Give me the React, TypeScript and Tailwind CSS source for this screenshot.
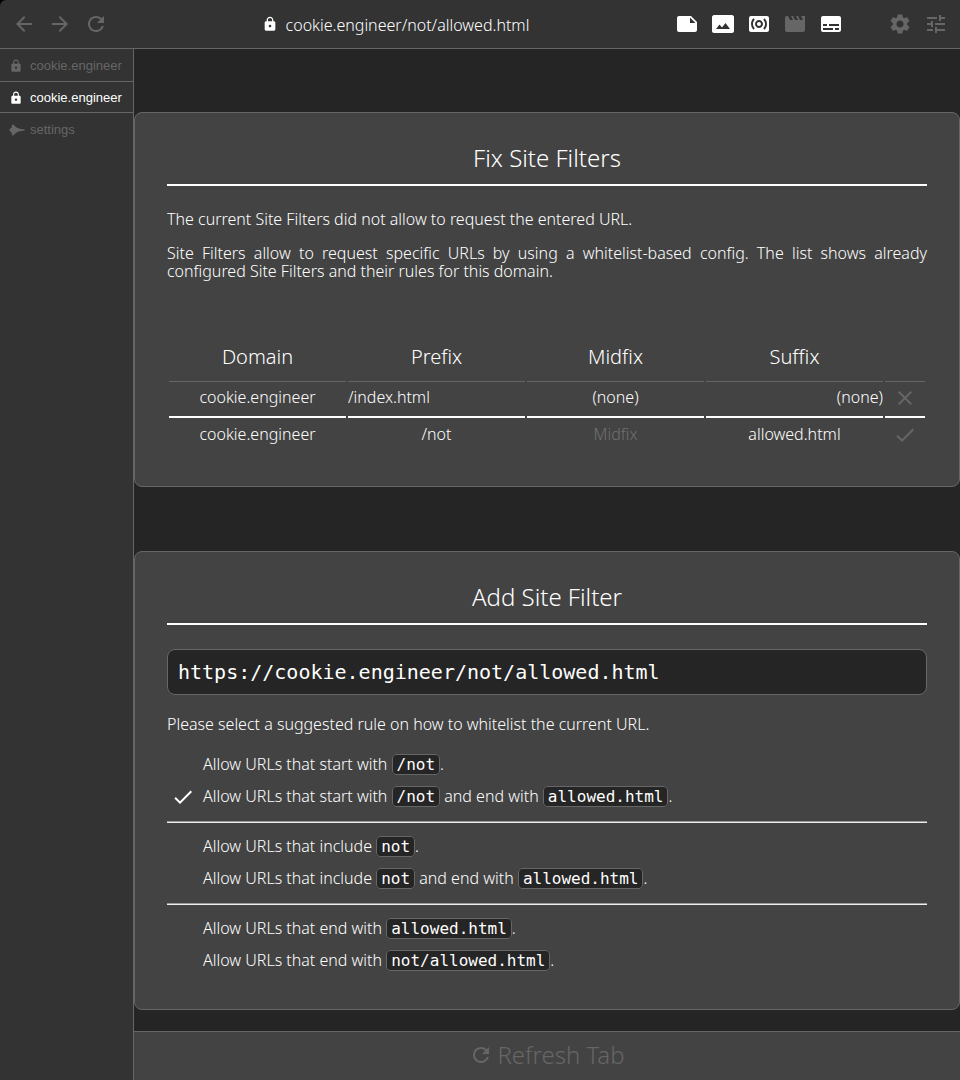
import React, { Fragment, useState } from "react";
import type { ReactNode } from "react";
import {
  MdArrowBack,
  MdArrowForward,
  MdCheck,
  MdClose,
  MdLock,
  MdMovie,
  MdNote,
  MdPhotoSizeSelectActual,
  MdRefresh,
  MdSettings,
  MdSubtitles,
  MdSurroundSound,
  MdTune,
} from "react-icons/md";

function IconButton({ label, active = false, children }: { label: string; active?: boolean; children: ReactNode }) {
  return (
    <button
      type="button"
      aria-label={label}
      className={active ? "size-6 text-2xl text-white" : "size-6 text-2xl text-[#666666]"}
    >
      {children}
    </button>
  );
}

function Header() {
  return (
    <header className="flex h-[49px] items-center rounded-tl-md border-b border-[#666666] bg-[#333333] px-3">
      <nav aria-label="History" className="flex gap-3 pr-3">
        <IconButton label="Back"><MdArrowBack /></IconButton>
        <IconButton label="Forward"><MdArrowForward /></IconButton>
        <IconButton label="Reload"><MdRefresh /></IconButton>
      </nav>
      <div className="flex flex-1 items-center justify-center gap-2 pr-1 text-white">
        <MdLock className="size-4" />
        <span className="pt-0.5 text-base leading-6">cookie.engineer/not/allowed.html</span>
      </div>
      <div className="flex gap-3">
        <IconButton label="Text" active><MdNote /></IconButton>
        <IconButton label="Images" active><MdPhotoSizeSelectActual /></IconButton>
        <IconButton label="Audio" active><MdSurroundSound /></IconButton>
        <IconButton label="Video"><MdMovie /></IconButton>
        <IconButton label="Other" active><MdSubtitles /></IconButton>
      </div>
      <div className="ml-[45px] flex gap-3">
        <IconButton label="Site settings"><MdSettings /></IconButton>
        <IconButton label="Browser settings"><MdTune /></IconButton>
      </div>
    </header>
  );
}

function ShipIcon() {
  return (
    <svg viewBox="0 0 16 14" className="h-3.5 w-4" fill="currentColor" aria-hidden="true">
      <path d="M3 1.4 L4.4 1.8 L7.6 4.6 L10.4 5.8 L15.8 6.4 V7.6 L10.4 8.2 L7.6 9.4 L4.4 12.2 L3 12.6 L2.6 9.4 L1.4 8.8 L0.2 7 L1.4 5.2 L2.6 4.6 Z" />
    </svg>
  );
}

function Sidebar() {
  const base = "flex h-8 w-full items-center border-y pl-[9px] pt-0.5 text-left font-['Liberation_Sans',sans-serif] text-[13px] font-normal ";
  const idle = base + "border-transparent text-[#666666]";
  return (
    <aside className="w-[134px] shrink-0 border-r border-[#666666] bg-[#333333]">
      <button type="button" className={idle}>
        <span className="w-[21px]"><MdLock className="size-3.5" /></span>cookie.engineer
      </button>
      <button type="button" className={base + "border-[#666666] text-white"}>
        <span className="w-[21px]"><MdLock className="size-3.5" /></span>cookie.engineer
      </button>
      <button type="button" className={idle}>
        <span className="w-[21px]"><ShipIcon /></span>settings
      </button>
    </aside>
  );
}

function Card({ title, children }: { title: string; children: ReactNode }) {
  return (
    <section className="rounded-lg border border-[#666666] bg-[#434343] p-8">
      <h2 className="mb-6 border-b-2 border-white pb-[13px] text-center text-2xl leading-[26px]">{title}</h2>
      {children}
    </section>
  );
}

function FilterTable() {
  const head = "h-12 border-b border-[#666666] p-0 pb-0.5 text-xl font-light";
  const cell = "h-[34px] border-b-2 border-white p-0 pb-1.5 text-base leading-[26px]";
  const field = "block h-8 w-full bg-transparent pb-1 text-center text-base text-white placeholder:text-[#707070] placeholder:opacity-100";
  return (
    <table className="mt-13 w-full table-fixed border-separate border-spacing-0.5">
      <thead>
        <tr>
          <th className={head}>Domain</th>
          <th className={head}>Prefix</th>
          <th className={head}>Midfix</th>
          <th className={head}>Suffix</th>
          <th className={head + " w-10"}></th>
        </tr>
      </thead>
      <tbody>
        <tr>
          <td className={cell + " text-center"}>cookie.engineer</td>
          <td className={cell + " text-left"}>/index.html</td>
          <td className={cell + " text-center"}>(none)</td>
          <td className={cell + " text-right"}>(none)</td>
          <td className="border-b-2 border-white p-0 pb-1">
            <button type="button" aria-label="Remove filter" className="mx-auto block text-2xl text-[#666666]"><MdClose /></button>
          </td>
        </tr>
        <tr>
          <td className="p-0"><input aria-label="Domain" className={field} defaultValue="cookie.engineer" /></td>
          <td className="p-0"><input aria-label="Prefix" className={field} defaultValue="/not" /></td>
          <td className="p-0"><input aria-label="Midfix" className={field} placeholder="Midfix" /></td>
          <td className="p-0"><input aria-label="Suffix" className={field} defaultValue="allowed.html" /></td>
          <td className="p-0 pb-0.5">
            <button type="button" aria-label="Confirm filter" className="mx-auto block text-2xl text-[#666666]"><MdCheck /></button>
          </td>
        </tr>
      </tbody>
    </table>
  );
}

function Code({ children }: { children: ReactNode }) {
  return (
    <code className="rounded border border-[#666666] bg-[#252525] px-1 font-['DejaVu_Sans_Mono',monospace] text-base font-normal">
      {children}
    </code>
  );
}

const ruleGroups: { verb: string; value: string; end?: string }[][] = [
  [
    { verb: "start with", value: "/not" },
    { verb: "start with", value: "/not", end: "allowed.html" },
  ],
  [
    { verb: "include", value: "not" },
    { verb: "include", value: "not", end: "allowed.html" },
  ],
  [
    { verb: "end with", value: "allowed.html" },
    { verb: "end with", value: "not/allowed.html" },
  ],
];

function RuleList() {
  const [selected, setSelected] = useState("0-1");
  return (
    <div role="radiogroup" aria-label="Suggested rules" className="mt-4">
      {ruleGroups.map((group, g) => (
        <Fragment key={g}>
          {g > 0 ? <hr className="my-2 h-0.5 border-y border-t-[#9a9a9a] border-b-[#eeeeee]" /> : null}
          {group.map((rule, r) => {
            const id = `${g}-${r}`;
            return (
              <label key={id} className="flex h-8 items-center gap-2 pl-1 text-base">
                <input
                  type="radio"
                  name="rule"
                  className="peer sr-only"
                  checked={selected === id}
                  onChange={() => setSelected(id)}
                />
                <MdCheck className="invisible size-6 shrink-0 peer-checked:visible" />
                <span className="pb-0.5">
                  Allow URLs that {rule.verb} <Code>{rule.value}</Code>
                  {rule.end ? <> and end with <Code>{rule.end}</Code></> : null}.
                </span>
              </label>
            );
          })}
        </Fragment>
      ))}
    </div>
  );
}

export default function App() {
  return (
    <div className="flex min-h-screen flex-col bg-black font-['Noto_Sans',sans-serif] font-light text-white">
      <Header />
      <div className="flex flex-1">
        <Sidebar />
        <div className="flex min-w-0 flex-1 flex-col bg-[#252525]">
          <main className="flex flex-1 flex-col gap-16 pt-[63px]">
            <Card title="Fix Site Filters">
              <p className="text-base leading-[18px]">The current Site Filters did not allow to request the entered URL.</p>
              <p className="mt-4 text-justify text-base leading-[18px]">
                Site Filters allow to request specific URLs by using a whitelist-based config. The list shows already
                configured Site Filters and their rules for this domain.
              </p>
              <FilterTable />
            </Card>
            <Card title="Add Site Filter">
              <input
                aria-label="URL"
                readOnly
                className="block h-[46px] w-full rounded-lg border border-[#666666] bg-[#252525] px-2.5 font-['DejaVu_Sans_Mono',monospace] text-xl font-normal"
                defaultValue="https://cookie.engineer/not/allowed.html"
              />
              <p className="mt-5 text-base leading-[18px]">Please select a suggested rule on how to whitelist the current URL.</p>
              <RuleList />
            </Card>
          </main>
          <footer className="mt-5 border-t border-[#666666] bg-[#434343]">
            <button type="button" className="flex h-12 w-full items-center justify-center gap-1 pb-0.5 text-2xl text-[#666666]">
              <MdRefresh />Refresh Tab
            </button>
          </footer>
        </div>
      </div>
    </div>
  );
}
